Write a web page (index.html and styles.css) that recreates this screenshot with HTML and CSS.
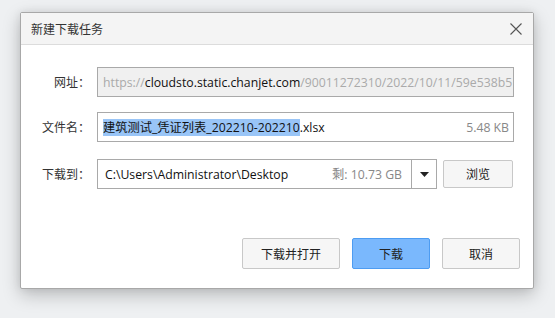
FILE: index.html
```html
<!DOCTYPE html>
<html lang="zh-CN">
<head>
<meta charset="utf-8">
<link rel="stylesheet" href="styles.css">
</head>
<body>
<div class="dialog">
  <div class="titlebar">
    <span class="title">新建下载任务</span>
    <svg class="close" width="12" height="12" viewBox="0 0 12 12"><path d="M0.5 0.5 L11.5 11.5 M11.5 0.5 L0.5 11.5" stroke="#555" stroke-width="1.1" fill="none"/></svg>
  </div>
  <div class="form">
    <div class="row">
      <label class="label">网址：</label>
      <div class="field disabled">
        <span class="dim">https://</span><span class="dark">cloudsto.static.chanjet.com</span><span class="dim">/90011272310/2022/10/11/59e538b5</span>
      </div>
    </div>
    <div class="row">
      <label class="label">文件名：</label>
      <div class="field">
        <span class="name"><span class="sel">建筑测试_凭证列表_202210-202210</span>.xlsx</span>
        <span class="size">5.48 KB</span>
      </div>
    </div>
    <div class="row row3">
      <label class="label">下载到：</label>
      <div class="field path">
        <span class="name">C:\Users\Administrator\Desktop</span>
        <span class="size free">剩: 10.73 GB</span>
        <span class="drop"><svg width="9" height="5" viewBox="0 0 9 5"><path d="M0 0 H9 L4.5 5 Z" fill="#222"/></svg></span>
      </div>
      <button class="btn browse">浏览</button>
    </div>
  </div>
  <div class="actions">
    <button class="btn wide">下载并打开</button>
    <button class="btn primary">下载</button>
    <button class="btn">取消</button>
  </div>
</div>
</body>
</html>
```
FILE: styles.css
```css
html, body {
  margin: 0;
  padding: 0;
}
body {
  width: 555px;
  height: 318px;
  background: #eef0f2;
  font-family: "Open Sans", "Noto Sans CJK SC", sans-serif;
  font-size: 12px;
  color: #333;
  overflow: hidden;
  padding-top: 12px;
  box-sizing: border-box;
}
.dialog {
  margin-left: 20px;
  width: 514px;
  height: 277px;
  box-sizing: border-box;
  background: #fff;
  border: 1px solid #a8a8a8;
  border-radius: 2px;
  box-shadow: 0 6px 18px rgba(0, 0, 0, 0.22), 0 0 8px rgba(0, 0, 0, 0.08);
  display: flex;
  flex-direction: column;
}
.titlebar {
  height: 31px;
  background: #f4f4f4;
  border-bottom: 1px solid #dcdcdc;
  display: flex;
  align-items: center;
  justify-content: space-between;
  padding: 0 11px 0 10px;
}
.title {
  color: #333;
}
.close {
  display: block;
}
.form {
  padding-top: 22px;
  display: flex;
  flex-direction: column;
  gap: 15px;
}
.row {
  display: flex;
  align-items: center;
}
.row3 {
  margin-top: 2px;
}
.label {
  width: 69px;
  text-align: right;
  margin-right: 7px;
  color: #333;
}
.field {
  width: 417px;
  height: 30px;
  box-sizing: border-box;
  border: 1px solid #a9a9a9;
  background: #fff;
  display: flex;
  align-items: center;
  padding: 0 4px 0 5px;
  white-space: nowrap;
  overflow: hidden;
  color: #111;
  font-size: 12.25px;
}
.field.disabled {
  background: #f0f0f0;
  padding-left: 5px;
}
.dim {
  color: #aaa;
}
.dark {
  color: #111;
}
.name {
  flex: 1;
}
.sel {
  background: #99c5f7;
}
.size {
  color: #888;
}
.path {
  width: 340px;
  padding-right: 0;
  padding-left: 7px;
}
.free {
  margin-right: 9px;
}
.drop {
  width: 24px;
  height: 100%;
  border-left: 1px solid #a9a9a9;
  display: flex;
  align-items: center;
  justify-content: center;
}
.drop svg {
  display: block;
}
.btn {
  font-family: inherit;
  font-size: 12px;
  color: #222;
  background: #f6f6f6;
  border: 1px solid #c8c8c8;
  border-radius: 2px;
  width: 78px;
  height: 31px;
  padding: 0;
}
.browse {
  width: 70px;
  height: 28px;
  margin-left: 6px;
}
.actions {
  margin-top: auto;
  margin-bottom: 19px;
  display: flex;
  justify-content: flex-end;
  gap: 12px;
  padding-right: 13px;
}
.wide {
  width: 98px;
}
.primary {
  background: #7ab8fd;
  border-color: #4d9cf2;
}
```
